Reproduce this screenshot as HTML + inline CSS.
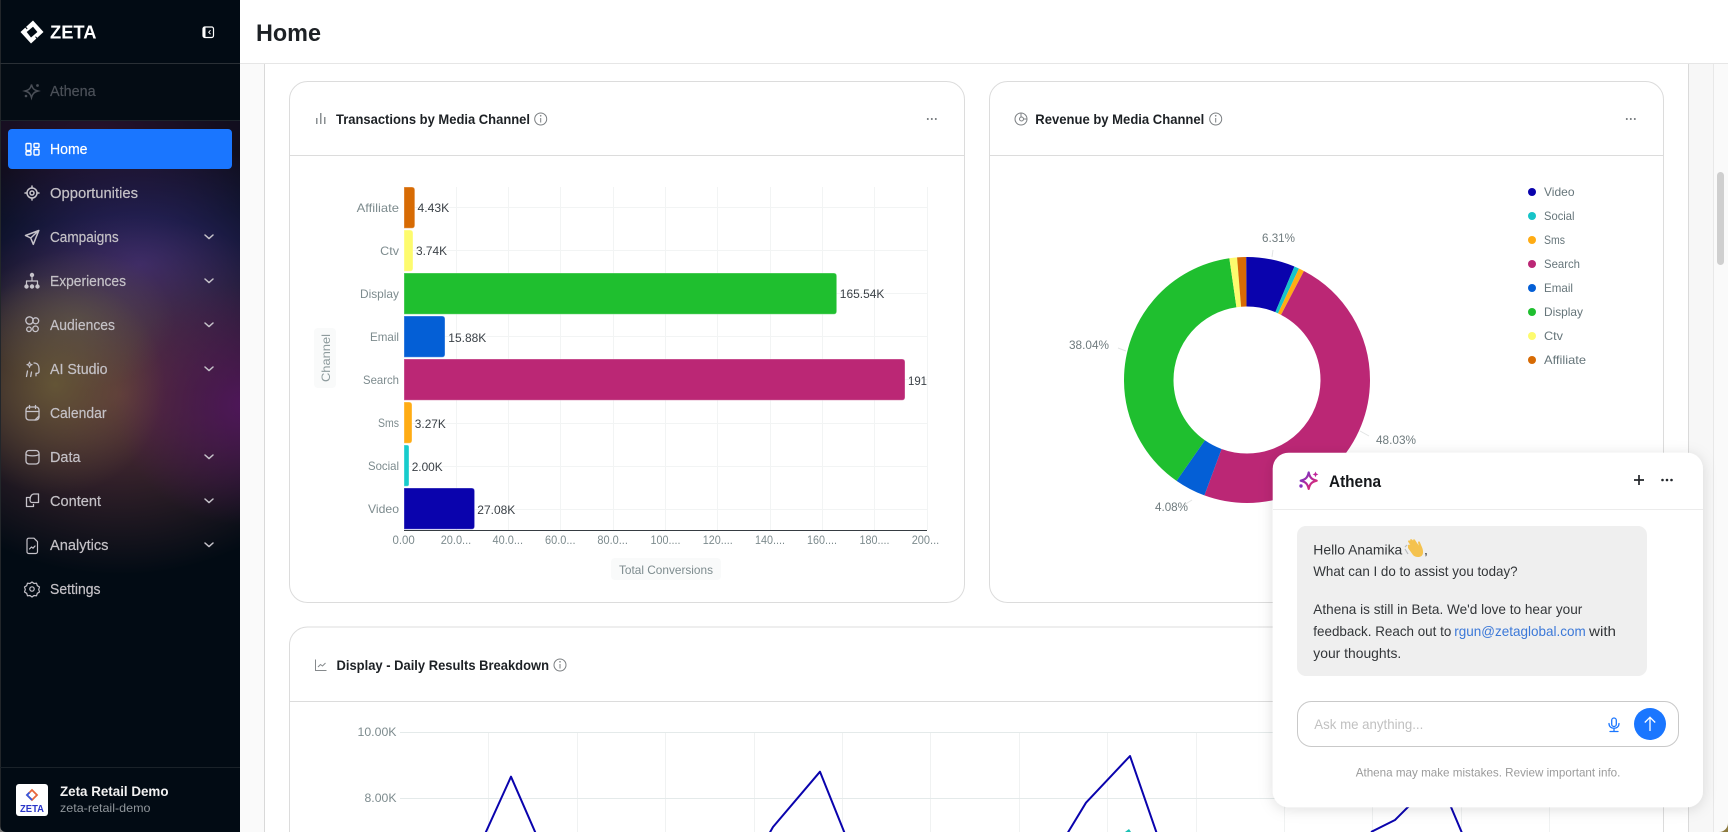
<!DOCTYPE html>
<html lang="en"><head><meta charset="utf-8"><title>Home</title>
<style>
html,body{margin:0;padding:0;width:1728px;height:832px;overflow:hidden;background:#fff}
#side{position:absolute;left:0;top:0;width:240px;height:832px;background:
radial-gradient(ellipse 110px 110px at 55px 385px,rgba(105,92,55,.85),rgba(105,92,55,0)),
radial-gradient(ellipse 130px 120px at 245px 405px,rgba(80,22,92,.95),rgba(80,22,92,0)),
radial-gradient(ellipse 100px 70px at 75px 320px,rgba(95,95,85,.55),rgba(95,95,85,0)),
radial-gradient(ellipse 230px 180px at 120px 395px,rgba(115,60,70,.8),rgba(115,60,70,0)),
radial-gradient(ellipse 200px 130px at 140px 265px,rgba(52,42,115,.95),rgba(52,42,115,0)),
radial-gradient(ellipse 240px 100px at 100px 130px,rgba(62,22,58,.6),rgba(62,22,58,0)),
#020b14}
#athena-row{position:absolute;left:0;top:64px;width:240px;height:56px;background:#040c14}
#head-row{position:absolute;left:0;top:0;width:240px;height:63px;background:#020b14}
svg{position:absolute;left:0;top:0}
text{font-family:"Liberation Sans",sans-serif}
.nav{font-size:15px;fill:#c4c1c6;stroke:#c4c1c6;stroke-width:.2px}
.ttl{font-size:14px;font-weight:700;fill:#1d2125}
.lab{font-size:12px;fill:#7d8b8e}
.val{font-size:12px;fill:#3b4147}
.msg{font-size:14px;fill:#333639}
</style></head><body>
<div id="side"><div id="head-row"></div><div id="athena-row"></div></div>
<svg width="1728" height="832" viewBox="0 0 1728 832" xmlns="http://www.w3.org/2000/svg">
<defs>
<linearGradient id="g" x1="0" y1="0" x2="1" y2="1"><stop offset="0" stop-color="#5f3fd6"/><stop offset=".5" stop-color="#b3289c"/><stop offset="1" stop-color="#ee3060"/></linearGradient>
<filter id="sh" x="-10%" y="-10%" width="120%" height="120%"><feDropShadow dx="0" dy="2" stdDeviation="7" flood-color="#000" flood-opacity=".13"/></filter>
</defs>

<!-- main bg -->
<rect x="240" y="0" width="1488" height="64" fill="#fff"/>
<rect x="240" y="64" width="24" height="768" fill="#fafafa"/>
<rect x="264" y="64" width="1424" height="768" fill="#fff"/>
<rect x="1688" y="64" width="25" height="768" fill="#f7f7f7"/>
<rect x="1713" y="64" width="15" height="768" fill="#fafafa"/>
<rect x="240" y="63" width="1488" height="1" fill="#e6e6e6"/>
<rect x="264" y="64" width="1" height="768" fill="#d9d9d9"/>
<rect x="1688" y="64" width="1" height="768" fill="#dadada"/>
<rect x="1713" y="64" width="1" height="768" fill="#e8e8e8"/>
<rect x="1717" y="172" width="7" height="93" rx="3.5" fill="#cfcfcf"/>
<path d="M1728 832v-9a9 9 0 0 1-9 9z" fill="#8c7a3e"/>
<text x="256" y="41" font-size="24" font-weight="700" fill="#1d2125" textLength="65" lengthAdjust="spacingAndGlyphs">Home</text>

<!-- sidebar chrome -->
<rect x="0" y="0" width="1" height="832" fill="#22262a"/>
<rect x="0" y="63" width="240" height="1" fill="#2a3036"/>
<rect x="0" y="120" width="240" height="1" fill="#1c232a"/>
<rect x="0" y="767" width="240" height="1" fill="#1a2229"/>
<path d="M0 832v-6a6 6 0 0 0 6 6z" fill="#777"/>
<!-- logo -->
<path fill-rule="evenodd" d="M33 20.500L43.500 32 31 43.500 20.500 32zM33 26.800L37.400 32 31 37.500 26.700 32z" fill="#fff"/>
<path d="M25 26.500l2.200 2.500M37.500 39l-2-2.300" stroke="#020b14" stroke-width="1"/>
<text x="50" y="38.500" font-size="18.500" font-weight="700" fill="#fff" textLength="46.500" lengthAdjust="spacingAndGlyphs">ZETA</text>
<rect x="203" y="27" width="10.500" height="10.500" rx="1.800" fill="none" stroke="#fff" stroke-width="1.200"/>
<rect x="203.500" y="27.500" width="2" height="9.500" fill="#fff"/>
<path d="M210.500 30.200l-1.800 2 1.800 2" fill="none" stroke="#fff" stroke-width="1"/>
<!-- athena row -->
<g fill="none" stroke="#4a4f57" stroke-width="1.500"><path d="M31.500 84.500c1 4.300 2.700 5.500 6.500 6.500-3.800 1-5.500 2.700-6.500 6.500-1-3.800-2.700-5.500-6.500-6.500 3.800-1 5.500-2.200 6.500-6.500z"/></g>
<circle cx="37.500" cy="85.500" r="1.400" fill="#4a4f57"/><circle cx="26" cy="96" r="1.300" fill="#4a4f57"/>
<text x="50" y="96" class="nav" style="fill:#4b5058;stroke:#4b5058" textLength="45.700" lengthAdjust="spacingAndGlyphs">Athena</text>
<!-- nav -->
<rect x="8" y="129" width="224" height="40" rx="4" fill="#1a76ff"/>
<g fill="none" stroke="#fff" stroke-width="1.400"><rect x="26" y="143.500" width="5" height="7" rx="1"/><rect x="34" y="143.500" width="5" height="4" rx="1"/><rect x="26" y="151.500" width="5" height="3.500" rx="1"/><rect x="34" y="149.500" width="5" height="5.500" rx="1"/></g>
<text x="50" y="154" class="nav" style="fill:#fff;stroke:#fff" textLength="37.500" lengthAdjust="spacingAndGlyphs">Home</text>
<text x="50" y="198" class="nav" textLength="88" lengthAdjust="spacingAndGlyphs">Opportunities</text>
<text x="50" y="242" class="nav" textLength="68.700" lengthAdjust="spacingAndGlyphs">Campaigns</text>
<text x="50" y="286" class="nav" textLength="76" lengthAdjust="spacingAndGlyphs">Experiences</text>
<text x="50" y="330" class="nav" textLength="65" lengthAdjust="spacingAndGlyphs">Audiences</text>
<text x="50" y="374" class="nav" textLength="57.500" lengthAdjust="spacingAndGlyphs">AI Studio</text>
<text x="50" y="418" class="nav" textLength="56.500" lengthAdjust="spacingAndGlyphs">Calendar</text>
<text x="50" y="462" class="nav" textLength="30.500" lengthAdjust="spacingAndGlyphs">Data</text>
<text x="50" y="506" class="nav" textLength="51" lengthAdjust="spacingAndGlyphs">Content</text>
<text x="50" y="550" class="nav" textLength="58.500" lengthAdjust="spacingAndGlyphs">Analytics</text>
<text x="50" y="594" class="nav" textLength="50.500" lengthAdjust="spacingAndGlyphs">Settings</text>
<g fill="none" stroke="#c6c3ca" stroke-width="1.500" stroke-linecap="round" stroke-linejoin="round">
<circle cx="32" cy="193" r="5"/><circle cx="32" cy="193" r="2"/><path d="M32 186v2M32 198v2M25 193h2M37 193h2"/>
<path d="M38.800 230.500L25.500 235.500 30.700 238 33.300 244.300zM30.700 238L38.800 230.500"/>
<path d="M32 277v4M26.500 284v-3h11v3" stroke-width="1.200"/>
<circle cx="29.500" cy="320.500" r="3.700" stroke-width="1.300"/><circle cx="35.700" cy="320.800" r="3" stroke-width="1.300"/><circle cx="29" cy="329.300" r="2.300" stroke-width="1.300"/><circle cx="35.500" cy="328.800" r="2.800" stroke-width="1.300"/>
<path d="M34 363c3.500 0 5 2.500 5 5.500v3c0 1-.8 1.800-2 1.800h-1v2.500M27.500 371l-1 5.500M31.500 372l-.8 4.500" stroke-width="1.300"/>
<path d="M29.500 362l.7 2 2 .7-2 .7-.7 2-.7-2-2-.7 2-.7z" stroke-width="1"/>
<rect x="26" y="407" width="13" height="13" rx="3" stroke-width="1.300"/><path d="M26 411.500h13M29.500 405.500v3M35.500 405.500v3M39 416l-4 4" stroke-width="1.300"/>
<rect x="26" y="450.500" width="13" height="13.500" rx="3" stroke-width="1.300"/><path d="M26 454.500c3 1.800 10 1.800 13 0" stroke-width="1.300"/>
<path d="M30 497.500h-3.500v9h7v-2M30 500c0-4 2-6 4-6h4.500v8.500H32c-1 0-2-1-2-2.500z" stroke-width="1.300"/>
<path d="M27 540c0-1 .8-1.800 1.800-1.800h5.200l3.500 3.500v10c0 1-.8 1.800-1.800 1.800h-7c-1 0-1.800-.8-1.700-1.800zM29.500 549l2-2 1.500 1.200 2-2.200" stroke-width="1.200"/>
<path d="M32 582l2 1.500 2.500-.3.800 2.500 2.200 1.300-.8 2.500.8 2.500-2.200 1.300-.8 2.500-2.500-.3-2 1.500-2-1.500-2.500.3-.8-2.500-2.200-1.300.8-2.500-.8-2.500 2.200-1.300.8-2.500 2.500.3z" stroke-width="1.200"/><circle cx="32" cy="589" r="2.200" stroke-width="1.200"/>
<path d="M205 235l4 3.600 4-3.600M205 279l4 3.600 4-3.600M205 323l4 3.600 4-3.600M205 367l4 3.600 4-3.600M205 455l4 3.600 4-3.600M205 499l4 3.600 4-3.600M205 543l4 3.600 4-3.600"/>
</g>
<g fill="#c6c3ca"><circle cx="32" cy="275" r="2.200"/><circle cx="26.500" cy="286.500" r="2.200"/><circle cx="32" cy="286.500" r="2.200"/><circle cx="37.500" cy="286.500" r="2.200"/></g>
<!-- workspace -->
<rect x="16" y="784" width="32" height="32" rx="3" fill="#fff"/>
<path d="M32 790l5 5-5 5-5-5z" fill="none" stroke="#e8663c" stroke-width="1.800"/><path d="M32 800l-5-5 2.500-2.500" fill="none" stroke="#3556dc" stroke-width="1.800"/>
<text x="20" y="812" font-size="10" font-weight="700" fill="#2a35c8" textLength="24" lengthAdjust="spacingAndGlyphs">ZETA</text>
<text x="60" y="796" font-size="14" font-weight="700" fill="#f2f2f2" textLength="108.500" lengthAdjust="spacingAndGlyphs">Zeta Retail Demo</text>
<text x="60" y="812" font-size="12" fill="#8f959a" textLength="90.500" lengthAdjust="spacingAndGlyphs">zeta-retail-demo</text>

<!-- Card 1 -->
<rect x="289.500" y="81.500" width="675" height="521" rx="18" fill="#fff" stroke="#dcdcdc"/>
<rect x="290" y="155" width="674" height="1" fill="#dcdcdc"/>
<g fill="#8a8f92"><rect x="316" y="118" width="1.500" height="6"/><rect x="320" y="113" width="1.500" height="11"/><rect x="324" y="117" width="1.500" height="7"/></g>
<text x="336" y="124" class="ttl" textLength="194" lengthAdjust="spacingAndGlyphs">Transactions by Media Channel</text>
<g fill="none" stroke="#7b7f82"><circle cx="540.700" cy="119" r="6"/><path d="M540.700 118v4.500"/></g><circle cx="540.700" cy="115.800" r=".8" fill="#7b7f82"/>
<g fill="#6d7276"><circle cx="927.800" cy="119" r="1"/><circle cx="931.800" cy="119" r="1"/><circle cx="935.800" cy="119" r="1"/></g>
<!-- grid -->
<g stroke="#f2f4f4" stroke-width="1">
<path d="M456.500 187V530M508.500 187V530M560.500 187V530M613.500 187V530M665.500 187V530M717.500 187V530M770.500 187V530M822.500 187V530M874.500 187V530M927.500 187V530"/>
<path d="M404 207.500H927M404 250.500H927M404 293.500H927M404 336.500H927M404 379.500H927M404 423.500H927M404 466.500H927M404 509.500H927"/>
</g>
<g stroke="#ffffff" stroke-opacity=".35" stroke-width="1">
<path d="M404 187h7.800q3 0 3 3v35.300q0 3-3 3H404z" fill="#d76b04"/>
<path d="M404 230h6q3 0 3 3v35.300q0 3-3 3h-6z" fill="#fdfb6e"/>
<path d="M404 273h429.700q3 0 3 3v35.300q0 3-3 3H404z" fill="#1fbf2f"/>
<path d="M404 316h38q3 0 3 3v35.300q0 3-3 3h-38z" fill="#045fd6"/>
<path d="M404 359h498q3 0 3 3v35.300q0 3-3 3H404z" fill="#bb2775"/>
<path d="M404 402h5q3 0 3 3v35.300q0 3-3 3h-5z" fill="#ffac14"/>
<path d="M404 445h3q2 0 2 2v37.300q0 2-2 2h-3z" fill="#17cccc"/>
<path d="M404 488h67.600q3 0 3 3v35.300q0 3-3 3H404z" fill="#0a03ad"/>
</g>
<rect x="404" y="530" width="523" height="1" fill="#363c42"/>
<g>
<text x="356.600" y="212" class="lab" textLength="42.400" lengthAdjust="spacingAndGlyphs">Affiliate</text>
<text x="380.200" y="255" class="lab" textLength="18.800" lengthAdjust="spacingAndGlyphs">Ctv</text>
<text x="360" y="298" class="lab" textLength="39" lengthAdjust="spacingAndGlyphs">Display</text>
<text x="370" y="341" class="lab" textLength="29" lengthAdjust="spacingAndGlyphs">Email</text>
<text x="363" y="384" class="lab" textLength="36" lengthAdjust="spacingAndGlyphs">Search</text>
<text x="378" y="427" class="lab" textLength="21" lengthAdjust="spacingAndGlyphs">Sms</text>
<text x="368" y="470" class="lab" textLength="31" lengthAdjust="spacingAndGlyphs">Social</text>
<text x="368" y="513" class="lab" textLength="31" lengthAdjust="spacingAndGlyphs">Video</text>
</g>
<g>
<text x="417.500" y="212" class="val" textLength="31.700" lengthAdjust="spacingAndGlyphs">4.43K</text>
<text x="416" y="255" class="val" textLength="31" lengthAdjust="spacingAndGlyphs">3.74K</text>
<text x="839.800" y="298" class="val" textLength="44.600" lengthAdjust="spacingAndGlyphs">165.54K</text>
<text x="448.300" y="342" class="val" textLength="38" lengthAdjust="spacingAndGlyphs">15.88K</text>
<text x="908" y="385" class="val" textLength="19" lengthAdjust="spacingAndGlyphs">191</text>
<text x="414.800" y="428" class="val" textLength="31" lengthAdjust="spacingAndGlyphs">3.27K</text>
<text x="411.700" y="471" class="val" textLength="31" lengthAdjust="spacingAndGlyphs">2.00K</text>
<text x="477.300" y="514" class="val" textLength="38" lengthAdjust="spacingAndGlyphs">27.08K</text>
</g>
<g>
<text x="392.500" y="544" class="lab" textLength="22.300" lengthAdjust="spacingAndGlyphs">0.00</text>
<text x="440.700" y="544" class="lab" textLength="30.500" lengthAdjust="spacingAndGlyphs">20.0...</text>
<text x="492.500" y="544" class="lab" textLength="30.500" lengthAdjust="spacingAndGlyphs">40.0...</text>
<text x="545" y="544" class="lab" textLength="30.500" lengthAdjust="spacingAndGlyphs">60.0...</text>
<text x="597.400" y="544" class="lab" textLength="30.500" lengthAdjust="spacingAndGlyphs">80.0...</text>
<text x="650.500" y="544" class="lab" textLength="30" lengthAdjust="spacingAndGlyphs">100....</text>
<text x="702.800" y="544" class="lab" textLength="30" lengthAdjust="spacingAndGlyphs">120....</text>
<text x="755" y="544" class="lab" textLength="30" lengthAdjust="spacingAndGlyphs">140....</text>
<text x="807" y="544" class="lab" textLength="30" lengthAdjust="spacingAndGlyphs">160....</text>
<text x="859.500" y="544" class="lab" textLength="30" lengthAdjust="spacingAndGlyphs">180....</text>
<text x="911.700" y="544" class="lab" textLength="27.500" lengthAdjust="spacingAndGlyphs">200...</text>
</g>
<rect x="611" y="558" width="110" height="22" rx="4" fill="#f9fafa"/>
<text x="619" y="574" class="lab" textLength="94" lengthAdjust="spacingAndGlyphs">Total Conversions</text>
<rect x="314" y="328" width="22" height="60" rx="4" fill="#f9fafa"/>
<text transform="translate(330 382) rotate(-90)" class="lab" style="fill:#8e9b9d" textLength="48" lengthAdjust="spacingAndGlyphs">Channel</text>

<!-- Card 2 -->
<rect x="989.500" y="81.500" width="674" height="521" rx="18" fill="#fff" stroke="#dcdcdc"/>
<rect x="990" y="155" width="673" height="1" fill="#dcdcdc"/>
<g fill="none" stroke="#7d8184"><circle cx="1021" cy="119" r="6"/><circle cx="1021.500" cy="119" r="2"/><path d="M1021 113v4M1023.500 119h3.500"/></g>
<text x="1035.300" y="124" class="ttl" textLength="169" lengthAdjust="spacingAndGlyphs">Revenue by Media Channel</text>
<g fill="none" stroke="#7b7f82"><circle cx="1215.700" cy="119" r="6"/><path d="M1215.700 118v4.500"/></g><circle cx="1215.700" cy="115.800" r=".8" fill="#7b7f82"/>
<g fill="#6d7276"><circle cx="1626.800" cy="119" r="1"/><circle cx="1630.800" cy="119" r="1"/><circle cx="1634.800" cy="119" r="1"/></g>
<g fill="none" stroke-width="49.500" transform="rotate(-90 1247 380)">
<circle cx="1247" cy="380" r="98.250" pathLength="100" stroke="#0a03ad" stroke-dasharray="6.31 93.69" stroke-dashoffset="0"/>
<circle cx="1247" cy="380" r="98.250" pathLength="100" stroke="#17c4c8" stroke-dasharray="0.64 99.36" stroke-dashoffset="-6.31"/>
<circle cx="1247" cy="380" r="98.250" pathLength="100" stroke="#ffac14" stroke-dasharray="0.72 99.28" stroke-dashoffset="-6.95"/>
<circle cx="1247" cy="380" r="98.250" pathLength="100" stroke="#bb2775" stroke-dasharray="48.03 51.97" stroke-dashoffset="-7.67"/>
<circle cx="1247" cy="380" r="98.250" pathLength="100" stroke="#045fd6" stroke-dasharray="4.08 95.92" stroke-dashoffset="-55.7"/>
<circle cx="1247" cy="380" r="98.250" pathLength="100" stroke="#1fbf2f" stroke-dasharray="38.04 61.96" stroke-dashoffset="-59.78"/>
<circle cx="1247" cy="380" r="98.250" pathLength="100" stroke="#fdfb6e" stroke-dasharray="1.01 98.99" stroke-dashoffset="-97.82"/>
<circle cx="1247" cy="380" r="98.250" pathLength="100" stroke="#d76b04" stroke-dasharray="1.17 98.83" stroke-dashoffset="-98.83"/>
</g>
<g fill="none" stroke="#e2e4e4"><path d="M1273 250l-1 7M1118 348l8 3M1360 431l9 5M1192 500l-8 5"/></g>
<text x="1262" y="242" class="lab" style="fill:#6f7b7e" textLength="33" lengthAdjust="spacingAndGlyphs">6.31%</text>
<text x="1069" y="349" class="lab" style="fill:#6f7b7e" textLength="40" lengthAdjust="spacingAndGlyphs">38.04%</text>
<text x="1376" y="444" class="lab" style="fill:#6f7b7e" textLength="40" lengthAdjust="spacingAndGlyphs">48.03%</text>
<text x="1155" y="511" class="lab" style="fill:#6f7b7e" textLength="33" lengthAdjust="spacingAndGlyphs">4.08%</text>
<circle cx="1532" cy="192" r="4" fill="#0a03ad"/><circle cx="1532" cy="216" r="4" fill="#17c4c8"/><circle cx="1532" cy="240" r="4" fill="#ffac14"/><circle cx="1532" cy="264" r="4" fill="#bb2775"/><circle cx="1532" cy="288" r="4" fill="#045fd6"/><circle cx="1532" cy="312" r="4" fill="#1fbf2f"/><circle cx="1532" cy="336" r="4" fill="#fdfb6e"/><circle cx="1532" cy="360" r="4" fill="#d76b04"/>
<text x="1544" y="196" class="lab" style="fill:#66757a" textLength="30.500" lengthAdjust="spacingAndGlyphs">Video</text>
<text x="1544" y="220" class="lab" style="fill:#66757a" textLength="30.500" lengthAdjust="spacingAndGlyphs">Social</text>
<text x="1544" y="244" class="lab" style="fill:#66757a" textLength="21" lengthAdjust="spacingAndGlyphs">Sms</text>
<text x="1544" y="268" class="lab" style="fill:#66757a" textLength="36" lengthAdjust="spacingAndGlyphs">Search</text>
<text x="1544" y="292" class="lab" style="fill:#66757a" textLength="29" lengthAdjust="spacingAndGlyphs">Email</text>
<text x="1544" y="316" class="lab" style="fill:#66757a" textLength="39" lengthAdjust="spacingAndGlyphs">Display</text>
<text x="1544" y="340" class="lab" style="fill:#66757a" textLength="19" lengthAdjust="spacingAndGlyphs">Ctv</text>
<text x="1544" y="364" class="lab" style="fill:#66757a" textLength="42" lengthAdjust="spacingAndGlyphs">Affiliate</text>

<!-- Card 3 -->
<path d="M289.500 845V645a18 18 0 0 1 18-18H1645.500a18 18 0 0 1 18 18V845" fill="#fff" stroke="#dcdcdc"/>
<rect x="290" y="701" width="1373" height="1" fill="#dcdcdc"/>
<path d="M315.500 659.500V670.500H326.500M318 667l2.500-2.500 2 1.500 3-3" fill="none" stroke="#85898c"/>
<text x="336.500" y="670" class="ttl" textLength="212.500" lengthAdjust="spacingAndGlyphs">Display - Daily Results Breakdown</text>
<g fill="none" stroke="#7b7f82"><circle cx="560" cy="665" r="6"/><path d="M560 664v4.500"/></g><circle cx="560" cy="661.800" r=".8" fill="#7b7f82"/>
<g stroke="#f0f2f2"><path d="M488.500 732V832M577.500 732V832M665.500 732V832M754.500 732V832M842.500 732V832M930.500 732V832M1019.500 732V832M1107.500 732V832M1196.500 732V832M1284.500 732V832M1372.500 732V832M1461.500 732V832M1549.500 732V832"/></g>
<g stroke="#e4eaea"><path d="M400 732.500H1640M400 798.500H1640"/></g>
<text x="357.500" y="736" class="lab" textLength="39" lengthAdjust="spacingAndGlyphs">10.00K</text>
<text x="364.500" y="802" class="lab" textLength="32" lengthAdjust="spacingAndGlyphs">8.00K</text>
<g fill="none" stroke="#0a03ad" stroke-width="2" stroke-linejoin="round">
<path d="M485 834L511 776.700 536 834"/>
<path d="M769 834L773 827 820 771.700 845 834"/>
<path d="M1067 834L1086 802.700 1130 756 1157 834"/>
<path d="M1371 832L1395 820 1410 805 1425 770 1451 807 1462 833"/>
</g>
<path d="M1125 832l4-3 2 3z" fill="#19c0b4"/>

<!-- Chat -->
<rect x="1272.700" y="452.700" width="430.300" height="354.600" rx="16" fill="#fff" filter="url(#sh)"/>
<rect x="1273" y="509" width="430" height="1" fill="#ececec"/>
<path d="M1308.700 472.500c1.100 5 3 7 8 8.200-5 1.200-6.900 3.200-8 8.200-1.100-5-3-7-8-8.200 5-1.200 6.900-3.200 8-8.200z" fill="none" stroke="url(#g)" stroke-width="2.200" stroke-linejoin="round"/>
<path d="M1315.500 471.500l.9 2 2 .9-2 .9-.9 2-.9-2-2-.9 2-.9z" fill="#c0249a"/><circle cx="1301" cy="486" r="1.700" fill="#8a2fc0"/>
<text x="1329" y="487" font-size="17" font-weight="700" fill="#15181b" textLength="52" lengthAdjust="spacingAndGlyphs">Athena</text>
<path d="M1639 475v10M1634 480h10" stroke="#23272b" stroke-width="1.700" fill="none"/>
<g fill="#23272b"><circle cx="1662.500" cy="480" r="1.300"/><circle cx="1667" cy="480" r="1.300"/><circle cx="1671.500" cy="480" r="1.300"/></g>
<rect x="1297" y="526" width="350" height="150" rx="9" fill="#efefef"/>
<text x="1313.300" y="554.500" class="msg" textLength="89" lengthAdjust="spacingAndGlyphs">Hello Anamika</text>
<path d="M1408 548l5 7c2 2.500 7 2.800 9 .5 1.500-1.800 1.200-4.800.3-7.500l-2.500-6c-.6-1.200-2-.6-1.700.6l.7 3-4-6c-.8-1-2.200 0-1.500 1.200l-1.500-1.400c-.9-.9-2.200.3-1.400 1.300l-.8-.2c-1-.6-2 .5-1.300 1.500l2 3c-1-.8-3-.2-2.300 1.500z" fill="#f4c24e"/>
<path d="M1405 549l3 5M1407 545l-2 2" stroke="#b9bcc0" stroke-width="1.200" fill="none"/>
<text x="1424" y="554.500" class="msg">,</text>
<text x="1313.300" y="576" class="msg" textLength="204.300" lengthAdjust="spacingAndGlyphs">What can I do to assist you today?</text>
<text x="1313.300" y="614" class="msg" textLength="269" lengthAdjust="spacingAndGlyphs">Athena is still in Beta. We'd love to hear your</text>
<text x="1313.300" y="636" class="msg" textLength="138" lengthAdjust="spacingAndGlyphs">feedback. Reach out to</text>
<text x="1454.300" y="636" class="msg" style="fill:#3b78d8" textLength="131.400" lengthAdjust="spacingAndGlyphs">rgun@zetaglobal.com</text>
<text x="1589" y="636" class="msg" textLength="27" lengthAdjust="spacingAndGlyphs">with</text>
<text x="1313.300" y="658" class="msg" textLength="88" lengthAdjust="spacingAndGlyphs">your thoughts.</text>
<rect x="1297.500" y="701.500" width="381" height="45" rx="14" fill="#fff" stroke="#c9c9c9"/>
<text x="1314.300" y="729" font-size="14" fill="#c1c1c1" textLength="109" lengthAdjust="spacingAndGlyphs">Ask me anything...</text>
<g fill="none" stroke="#1a76ff" stroke-width="1.300" stroke-linecap="round"><rect x="1611.700" y="718" width="4.600" height="8.500" rx="2.300"/><path d="M1609 723.500c0 6.500 10 6.500 10 0M1614 728v3M1610 731.500h8"/></g>
<circle cx="1650" cy="724" r="16" fill="#1a76ff"/>
<path d="M1650 731v-13.500M1644.800 722.500l5.200-5.200 5.200 5.200" fill="none" stroke="#fff" stroke-width="1.300"/>
<text x="1355.700" y="776.500" font-size="12" fill="#9b9b9b" textLength="264.700" lengthAdjust="spacingAndGlyphs">Athena may make mistakes. Review important info.</text>
</svg>
</body></html>
